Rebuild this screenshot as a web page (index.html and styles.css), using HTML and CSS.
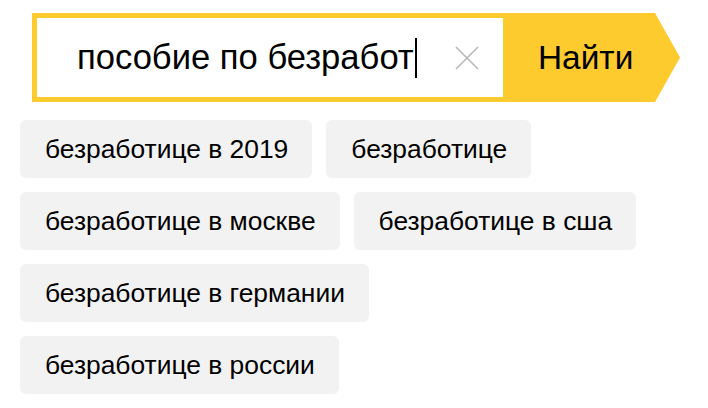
FILE: index.html
```html
<!DOCTYPE html>
<html lang="ru">
<head>
  <meta charset="UTF-8">
  <title>Поиск</title>
  <link rel="stylesheet" href="styles.css">
</head>
<body>
  <form class="search">
    <div class="field">
      <span class="query">пособие по безработ</span><span class="caret"></span>
      <svg class="clear" width="24" height="24" viewBox="0 0 24 24">
        <path d="M1 1L23 23M23 1L1 23" stroke="#b8b8b8" stroke-width="1.6" fill="none"/>
      </svg>
    </div>
    <button type="button" class="btn">Найти</button>
  </form>

  <div class="suggest">
    <a class="chip">безработице в 2019</a>
    <a class="chip">безработице</a>
    <a class="chip">безработице в москве</a>
    <a class="chip">безработице в сша</a>
    <a class="chip">безработице в германии</a>
    <a class="chip">безработице в россии</a>
  </div>
</body>
</html>
```

FILE: styles.css
```css
body {
  margin: 0;
  padding: 13px 20px;
  background: #fff;
  color: #000;
  font-family: 'Liberation Sans', Arial, sans-serif;
}

.search {
  display: flex;
  height: 89px;
  margin: 0 0 18px 12px;
}

.field {
  display: flex;
  align-items: center;
  width: 466px;
  border: 5px solid #fecb2f;
  border-right: none;
  background: #fff;
}

.query {
  margin-left: 40px;
  font-size: 34.6px;
  white-space: nowrap;
}

.caret {
  width: 2px;
  height: 40px;
  margin-left: 1px;
  background: #000;
}

.clear {
  margin-left: auto;
  margin-right: 24px;
}

.btn {
  width: 177px;
  padding: 0 0 0 35px;
  border: none;
  background: #fecb2f;
  color: #000;
  font-family: 'Liberation Sans', Arial, sans-serif;
  font-size: 33.4px;
  text-align: left;
  clip-path: polygon(0 0, calc(100% - 25px) 0, 100% 50%, calc(100% - 25px) 100%, 0 100%);
  cursor: pointer;
}

.suggest {
  display: flex;
  flex-wrap: wrap;
  gap: 14px;
  width: 668px;
}

.chip {
  display: flex;
  align-items: center;
  height: 58px;
  padding: 0 24px 0 25px;
  border-radius: 6px;
  background: #f2f2f2;
  font-size: 26.4px;
  cursor: pointer;
}
```
